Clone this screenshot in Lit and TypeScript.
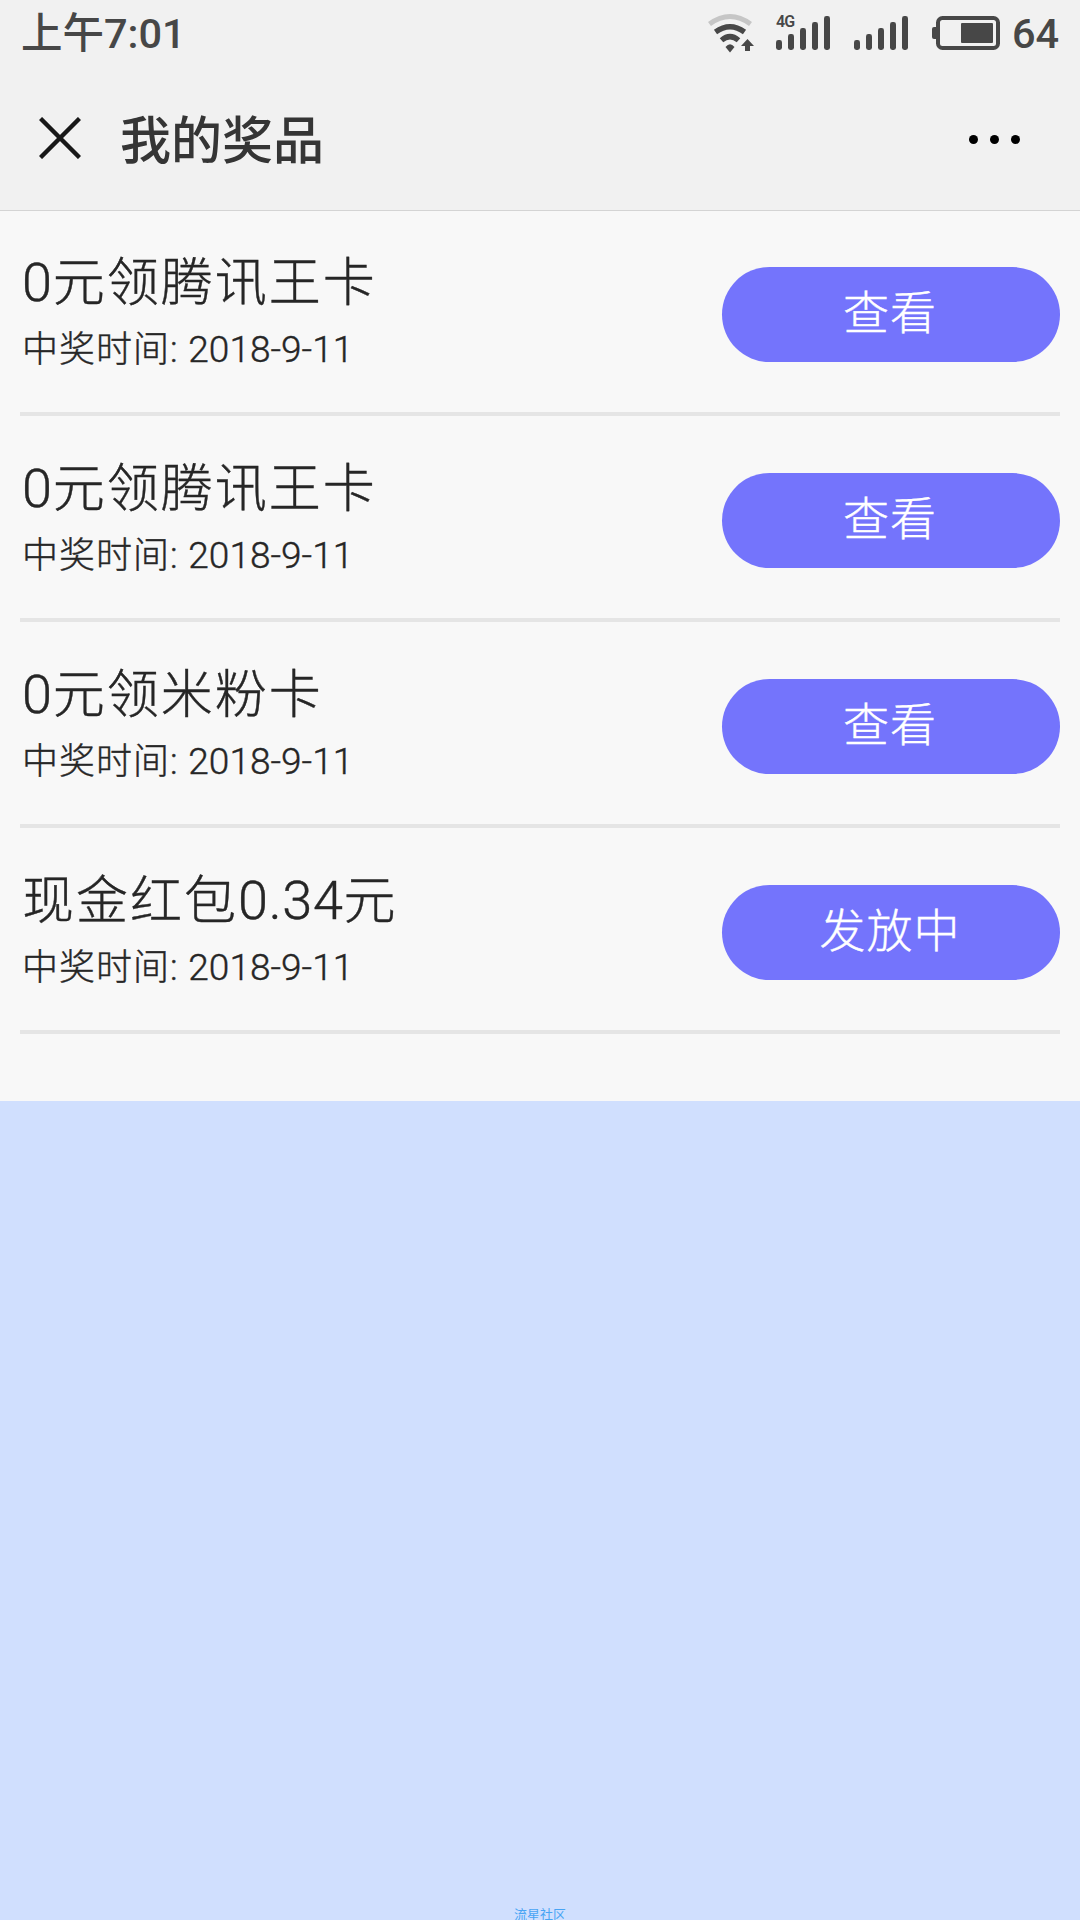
import { LitElement, html, css, svg } from "lit";
import { customElement, property } from "lit/decorators.js";

interface Prize {
  name: string;
  date: string;
  action: string;
}

const PRIZES: Prize[] = [
  { name: "0元领腾讯王卡", date: "2018-9-11", action: "查看" },
  { name: "0元领腾讯王卡", date: "2018-9-11", action: "查看" },
  { name: "0元领米粉卡", date: "2018-9-11", action: "查看" },
  { name: "现金红包0.34元", date: "2018-9-11", action: "发放中" },
];

// Five rising signal bars, shared by both SIM indicators.
const signalBars = [0, 1, 2, 3, 4].map(
  (i) => svg`<rect x=${i * 12} y=${24 - i * 6} width="6" height=${10 + i * 6} rx="2.4" />`
);

// Wraps runs of digits so that they can be sized apart from the Chinese characters.
const withNumerals = (text: string) =>
  text
    .split(/([0-9.]+)/)
    .filter((part) => part !== "")
    .map((part) => (/^[0-9.]/.test(part) ? html`<span class="num">${part}</span>` : part));

@customElement("status-bar")
class StatusBar extends LitElement {
  static styles = css`
    :host {
      display: flex;
      align-items: flex-start;
      height: 68px;
      padding: 0 20px 0 21px;
      box-sizing: border-box;
      color: #474747;
      font-family: Roboto, "Noto Sans CJK SC", sans-serif;
      font-weight: 500;
      font-size: 41.5px;
      line-height: 48px;
    }
    .time { flex: 1; padding-top: 10px; white-space: nowrap; }
    svg { display: block; fill: currentColor; flex: none; }
    .wifi { margin: 12px 22px 0 0; }
    .cell { position: relative; margin: 16px 24px 0 0; }
    .tag {
      position: absolute;
      left: 0;
      top: -3px;
      font-size: 16px;
      line-height: 18px;
      letter-spacing: -0.8px;
      font-weight: 600;
    }
    .battery { margin: 16px 12px 0 0; }
    .level { width: 48px; padding-top: 10px; }
  `;

  render() {
    return html`
      <div class="time">上午7:01</div>
      <svg class="wifi" width="47" height="42" viewBox="0 0 47 42">
        <g fill="none" stroke="currentColor" stroke-width="5.4">
          <path stroke="#c6c6c6" stroke-width="5" d="M2.500 12Q23 -3 43.500 12" />
          <path d="M8.500 20Q23 9.500 37.500 20" />
          <path d="M14.500 28.200Q23 21 31.500 28.200" />
        </g>
        <path d="M18.500 35Q23 29.500 27.500 35L23 40.500Z" />
        <path d="M40.500 27L47 34H43V39H38V34H34Z" />
      </svg>
      <div class="cell">
        <svg width="54" height="34" viewBox="0 0 54 34">${signalBars}</svg>
        <span class="tag">4G</span>
      </div>
      <div class="cell">
        <svg width="54" height="34" viewBox="0 0 54 34">${signalBars}</svg>
      </div>
      <svg class="battery" width="68" height="34" viewBox="0 0 68 34">
        <rect x="6" y="2" width="60" height="30" rx="4.500" fill="none" stroke="currentColor" stroke-width="4" />
        <rect x="0" y="11" width="6" height="12" rx="2" />
        <rect x="29" y="7" width="32" height="20" rx="1" />
      </svg>
      <div class="level">64</div>
    `;
  }
}

@customElement("title-bar")
class TitleBar extends LitElement {
  static styles = css`
    :host {
      display: flex;
      align-items: center;
      height: 143px;
      padding: 0 60px 0 39px;
      box-sizing: border-box;
      border-bottom: 1px solid #d4d4d4;
    }
    .close { margin-bottom: 2px; flex: none; }
    .title {
      flex: 1;
      margin: 0 0 5px 39px;
      color: #353535;
      font: 500 51px/60px "Noto Sans CJK SC", sans-serif;
    }
    .more { display: flex; gap: 12px; }
    .dot { width: 9px; height: 9px; border-radius: 50%; background: #000; }
  `;

  render() {
    return html`
      <svg class="close" width="42" height="42" viewBox="0 0 42 42">
        <path d="M1.500 1.500L40.500 40.500M40.500 1.500L1.500 40.500" fill="none" stroke="#181818" stroke-width="4.4" />
      </svg>
      <h1 class="title">我的奖品</h1>
      <div class="more"><i class="dot"></i><i class="dot"></i><i class="dot"></i></div>
    `;
  }
}

@customElement("prize-row")
class PrizeRow extends LitElement {
  @property({ attribute: false }) prize!: Prize;

  static styles = css`
    :host {
      display: flex;
      justify-content: space-between;
      height: 206px;
      margin: 0 20px;
      box-sizing: border-box;
      border-bottom: 4px solid #e5e5e5;
      color: #262626;
      font-family: Roboto, "Noto Sans CJK SC", sans-serif;
      font-weight: 300;
      -webkit-text-stroke: 0.4px currentColor;
    }
    .info { padding: 43px 0 0 2px; white-space: nowrap; }
    .name { height: 60px; font-size: 52px; line-height: 60px; letter-spacing: 2px; }
    .name .num { font-size: 54px; letter-spacing: 0.7px; }
    .date { height: 48px; margin-top: 13px; font-size: 36px; line-height: 48px; letter-spacing: 1px; }
    .when { font-size: 37px; letter-spacing: 0; }
    .action {
      width: 338px;
      height: 95px;
      margin-top: 57px;
      padding: 0 2px 12px 0;
      border: 0;
      border-radius: 48px;
      background: #7474fc;
      color: #fff;
      font: 300 46px/60px "Noto Sans CJK SC", sans-serif;
      letter-spacing: 1px;
      -webkit-text-stroke: 0.4px currentColor;
    }
  `;

  render() {
    return html`
      <div class="info">
        <div class="name">${withNumerals(this.prize.name)}</div>
        <div class="date">中奖时间: <span class="when">${this.prize.date}</span></div>
      </div>
      <button class="action">${this.prize.action}</button>
    `;
  }
}

@customElement("app-root")
class AppRoot extends LitElement {
  static styles = css`
    :host {
      display: flex;
      flex-direction: column;
      width: 1080px;
      height: 1920px;
      overflow: hidden;
      background: #d0dffe;
    }
    .top { background: #f1f1f1; }
    .list { display: flex; flex-direction: column; height: 890px; background: #f8f8f8; }
    .rows { margin-top: -1px; }
    .watermark {
      height: 14px;
      margin-top: auto;
      color: #48a4f4;
      font: 400 13px/15px "Noto Sans CJK SC", sans-serif;
      text-align: center;
    }
  `;

  render() {
    return html`
      <header class="top">
        <status-bar></status-bar>
        <title-bar></title-bar>
      </header>
      <main class="list">
        <div class="rows">
          ${PRIZES.map((prize) => html`<prize-row .prize=${prize}></prize-row>`)}
        </div>
      </main>
      <footer class="watermark">流星社区</footer>
    `;
  }
}
